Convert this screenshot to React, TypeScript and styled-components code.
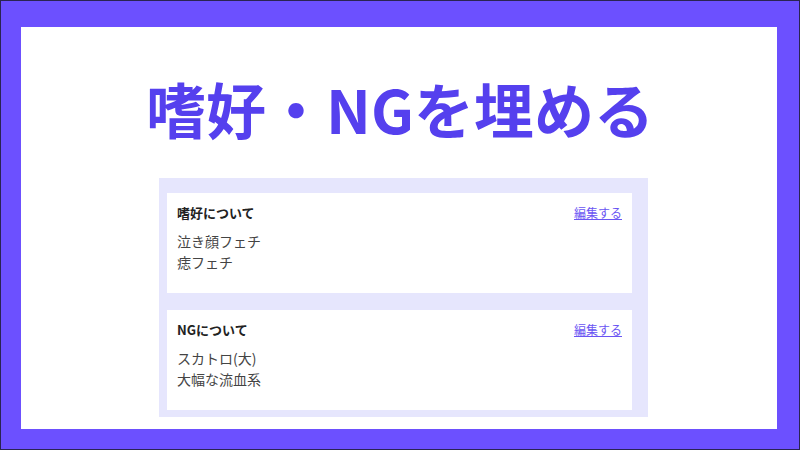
import * as React from 'react';
import styled, { createGlobalStyle } from 'styled-components';

const GlobalStyle = createGlobalStyle`
  html, body {
    margin: 0;
    padding: 0;
    background: #ffffff;
  }

  body {
    font-family: 'Noto Sans CJK JP', 'Noto Sans', sans-serif;
  }
`;

const Frame = styled.div`
  box-sizing: border-box;
  width: 800px;
  height: 450px;
  padding: 26px 22px 20px 20px;

  background: #6c50ff;
  border: 1px solid #2a2452;
`;

const Panel = styled.div`
  display: flex;
  flex-direction: column;
  align-items: center;
  height: 100%;

  background: #ffffff;
`;

const Title = styled.h1`
  margin: 51px 0 0 2px;

  font-size: 60px;
  font-weight: 700;
  line-height: 1;
  color: #5540ee;
  white-space: nowrap;
`;

const CardList = styled.div`
  box-sizing: border-box;
  align-self: flex-start;
  display: flex;
  flex-direction: column;
  gap: 17px;

  width: 489px;
  margin: 40px 0 0 138px;
  padding: 15px 16px 7px 8px;

  background: #e6e6fd;
`;

const Card = styled.section`
  box-sizing: border-box;
  height: 100px;
  padding: 10px;

  background: #ffffff;
`;

const CardHeader = styled.div`
  display: flex;
  align-items: center;
  justify-content: space-between;
  height: 19px;
`;

const CardTitle = styled.h2`
  margin: 0;

  font-size: 13px;
  font-weight: 700;
  line-height: 19px;
  color: #222222;
`;

const EditLink = styled.a`
  font-size: 12px;
  line-height: 19px;
  color: #6a54f3;
  text-decoration: underline;
  cursor: pointer;
`;

const ItemList = styled.ul`
  margin: 9px 0 0 0;
  padding: 0;
  list-style: none;
`;

const Item = styled.li`
  font-size: 14px;
  line-height: 21px;
  color: #444444;
`;

interface ISection {
  title: string;
  items: string[];
}

const sections: ISection[] = [
  { title: '嗜好について', items: ['泣き顔フェチ', '痣フェチ'] },
  { title: 'NGについて', items: ['スカトロ(大)', '大幅な流血系'] }
];

const App: React.FunctionComponent = () => {
  return (
    <>
      <GlobalStyle />
      <Frame>
        <Panel>
          <Title>嗜好・NGを埋める</Title>
          <CardList>
            {sections.map((section) => (
              <Card key={section.title}>
                <CardHeader>
                  <CardTitle>{section.title}</CardTitle>
                  <EditLink>編集する</EditLink>
                </CardHeader>
                <ItemList>
                  {section.items.map((item) => (
                    <Item key={item}>{item}</Item>
                  ))}
                </ItemList>
              </Card>
            ))}
          </CardList>
        </Panel>
      </Frame>
    </>
  );
};

export default App;
